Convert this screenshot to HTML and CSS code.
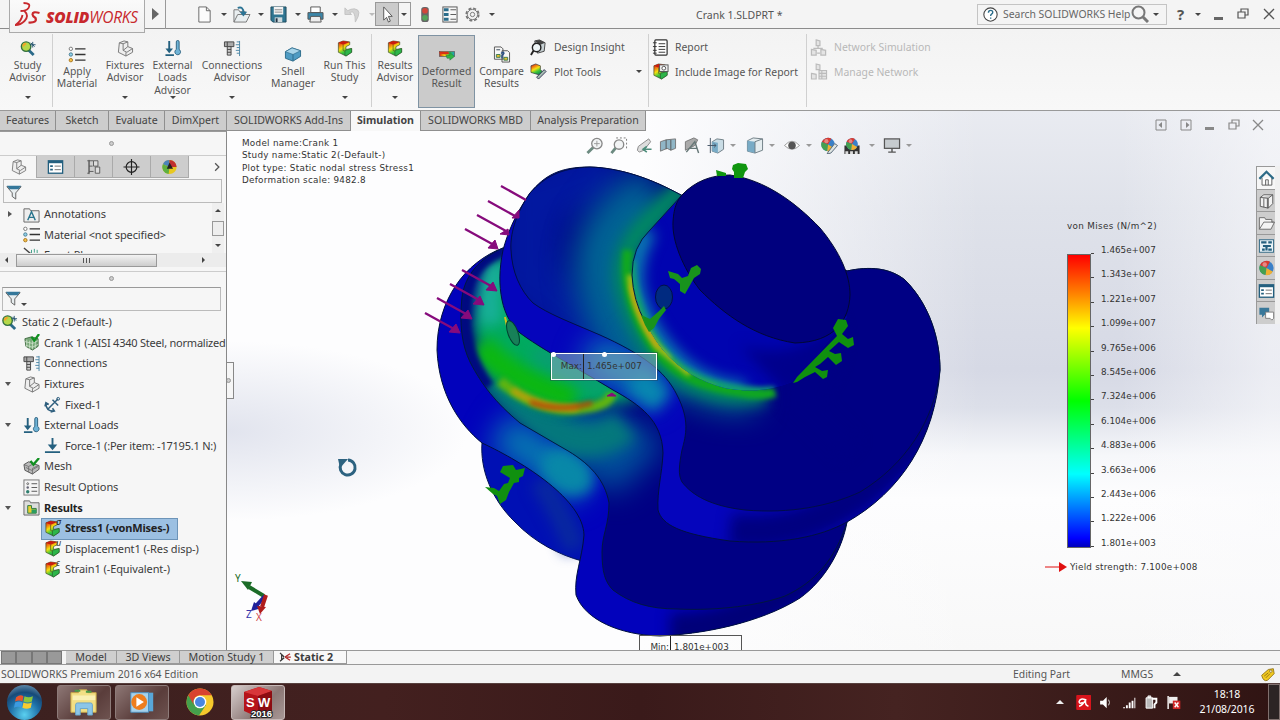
FILE: index.html
```html
<!DOCTYPE html>
<html lang="en">
<head>
	<meta charset="UTF-8">
	<title>Crank 1.SLDPRT - SOLIDWORKS</title>
	<link rel="stylesheet" href="styles.css">
</head>
<body>
	<svg class="defs" width="0" height="0">
		<defs>
			<linearGradient id="rainbow" x1="0" y1="0" x2="0.5" y2="1"><stop offset="0" stop-color="#d81010"/><stop offset=".3" stop-color="#f08010"/><stop offset=".5" stop-color="#f5e010"/><stop offset=".75" stop-color="#3cc83c"/><stop offset="1" stop-color="#158a50"/></linearGradient>
			<linearGradient id="rainbowX"><stop offset="0" stop-color="#e02010"/><stop offset=".35" stop-color="#f0e010"/><stop offset=".65" stop-color="#30c040"/><stop offset="1" stop-color="#20a0c0"/></linearGradient>
			<symbol id="i-plot" viewBox="0 0 18 18"><path d="M2 3 7 1l7 1v3l-4 2v3l6-1v4l-6 4-8-4z" fill="url(#rainbow)" stroke="#3a4a20" stroke-width=".7"/><path d="M2 3l5 2 7-3-7-1z" fill="#c81c10"/><path d="M9 11l7-2v4l-6 4-1-1z" fill="#2db54a" stroke="#2a5a2a" stroke-width=".6"/><path d="M7 5v6l2 1" stroke="#5a5a20" stroke-width=".8" fill="none"/></symbol>
			<symbol id="i-part" viewBox="0 0 18 18"><path d="M3 3 8 1l4 1v5l5 2v4l-7 4-8-4z" fill="#eee" stroke="#777"/><path d="M3 3l4 1v7l4 2 6-4M7 4l5-2M7 11l5-4M10 13v4" fill="none" stroke="#777"/></symbol>
			<symbol id="i-study" viewBox="0 0 18 18"><path d="M9 10l6 6" stroke="#2b6a8a" stroke-width="3"/><circle cx="7" cy="7" r="5" fill="#b5d94a" stroke="#33713e" stroke-width="1.5"/><path d="M4 7a3 3 0 0 1 3-3" stroke="#f3a42b" stroke-width="2" fill="none"/><path d="M14 2v6M11 5h6M12 3l4 4" stroke="#24536e"/></symbol>
			<symbol id="i-list" viewBox="0 0 18 18"><path d="M7 3h11M7 9h11M7 15h11" stroke="#333" stroke-width="1.4"/><circle cx="2.5" cy="3" r="1.8" fill="#fff" stroke="#777"/><circle cx="2.5" cy="9" r="1.8" fill="#8fd0e8" stroke="#4a7c93"/><circle cx="2.5" cy="15" r="1.8" fill="#f6c24a" stroke="#a9761e"/></symbol>
			<symbol id="i-loads" viewBox="0 0 18 18"><path d="M5 1v11M1 16h9" stroke="#24607f" stroke-width="2"/><path d="M1 9h8l-4 5z" fill="#24607f"/><path d="M12.500 2a1.500 1.500 0 0 1 3 0v8a3 3 0 1 1-3 0z" fill="#6fb3d6" stroke="#2d617e"/></symbol>
			<symbol id="i-bolt" viewBox="0 0 18 18"><path d="M1 2h10v5H1z" fill="#aaa" stroke="#444"/><path d="M4 7h4v9H4zM4 10h4M4 13h4M4 2v5" fill="#ccc" stroke="#444"/><path d="M17 1v16M14 2h3M13 5h4M14 8h3M13 11h4M14 14h3" stroke="#4b86a6"/></symbol>
			<symbol id="i-shell" viewBox="0 0 18 18"><path d="M1 6l7-4 9 3v6l-8 5-8-3z" fill="#4f9cc4" stroke="#2c6b8b"/><path d="M1 6l8 3 8-4-9-3z" fill="#a8d5ea" stroke="#2c6b8b" stroke-width=".7"/><path d="M9 9v7" fill="none" stroke="#2c6b8b"/></symbol>
			<symbol id="i-def" viewBox="0 0 18 18"><rect x="1" y="6" width="16" height="5" fill="url(#rainbowX)" stroke="#555" stroke-width=".7"/><path d="M1 6h9l2 2-4 1-7-1z" fill="#d83018"/><path d="M8 10h4V7l5 4-5 4v-2H9z" fill="#2fb844" stroke="#2a6a4a" stroke-width=".5"/></symbol>
			<symbol id="i-compare" viewBox="0 0 18 18"><path d="M1 1h7l2 2v11H1zM9 5h6l2 2v10H9z" fill="#f7f7f7" stroke="#555"/><path d="M3 9h4v3H3zM11 12h4v3h-4z" fill="#e6c030" stroke="#397b52"/><path d="M3 4h4" stroke="#345"/><path d="M8 8q3-3 3 0l-2 2v3" stroke="#254f86" stroke-width="1.500" fill="none"/></symbol>
			<symbol id="i-insight" viewBox="0 0 18 18"><path d="M5 2l5-1 6 3-1 9-7 2z" fill="#c8d2d5" stroke="#444"/><path d="M5 2l5-1 6 3-5 2z" fill="#444"/><circle cx="7" cy="9" r="4.500" fill="#eef5f7" stroke="#222" stroke-width="1.500"/><path d="M4 12l-3 5" stroke="#222" stroke-width="2"/></symbol>
			<symbol id="i-tools" viewBox="0 0 18 18"><path d="M1 3l5-2 5 2v4l2 2-2 4-10-3z" fill="url(#rainbow)" stroke="#333" stroke-width=".7"/><path d="M7 15l8-8 2 2-8 8z" fill="#a5bcb0" stroke="#335"/></symbol>
			<symbol id="i-report" viewBox="0 0 18 18"><rect x="3" y="1" width="13" height="16" rx="1" fill="#fff" stroke="#333" stroke-width="1.300"/><path d="M7 5h7M7 8h7M7 11h7M7 14h7M1 4h4M1 8h4M1 12h4M1 15h4" stroke="#333"/></symbol>
			<symbol id="i-image" viewBox="0 0 18 18"><use href="#i-plot"/><rect x="8" y="2" width="9" height="7" fill="#eee" stroke="#555"/><circle cx="12.500" cy="5.500" r="2" fill="#fff" stroke="#555"/></symbol>
			<symbol id="i-net" viewBox="0 0 18 18"><path d="M6 1l4 1v5H6zM1 11l5 1v5H1zM11 11l5 1v5h-5zM8 7v3M3 10h10M7 15h3" fill="#e4e4e4" stroke="#bbb" stroke-width="1.300"/></symbol>
			<symbol id="i-net2" viewBox="0 0 18 18"><path d="M6 1l4 1v5H6zM1 11l5 1v5H1zM9 8h8v9H9zM9 11h8M9 14h8M12 8v9" fill="#e4e4e4" stroke="#bbb" stroke-width="1.200"/></symbol>
			<symbol id="i-filter" viewBox="0 0 18 18"><path d="M1 3h16l-6 7v7l-4-3v-4z" fill="#e8eef0" stroke="#555"/><path d="M1 2h16l-3 4H4z" fill="#34779a"/></symbol>
			<symbol id="i-annot" viewBox="0 0 18 18"><path d="M1 3h6l1 2h9v12H1z" fill="#eee" stroke="#666"/><path d="M5 15l4-9 4 9M6.500 12h5" fill="none" stroke="#28748d" stroke-width="1.500"/></symbol>
			<symbol id="i-mesh" viewBox="0 0 18 18"><path d="M2 5l7-2 7 2v8l-6 4-7-4z" fill="#78a878" stroke="#456e45"/><path d="M4 6v8M7 7v9M10 7v9M13 6v9M2 8l8 2 6-3M3 12l7 2 6-3" stroke="#dcebd9" stroke-width=".7" fill="none"/><path d="M9 3l3 4 5-7" stroke="#109020" stroke-width="2.400" fill="none"/></symbol>
			<symbol id="i-mesh2" viewBox="0 0 18 18"><path d="M1 7l5-3 5 2 6 2v4l-7 5-8-4z" fill="#bbb" stroke="#555"/><path d="M1 7l5 2 5-3M6 9v6M10 11l6-3M10 11v6M3 10l6 3 7-4" stroke="#666" stroke-width=".8" fill="none"/><path d="M8 3l3 4 6-7" stroke="#109020" stroke-width="2.400" fill="none"/></symbol>
			<symbol id="i-fixed" viewBox="0 0 18 18"><path d="M4 14L15 3M2 8q0 8 8 8M1 11l1-4 3 2M7 17l4-1-2-3M9 4l6 6" stroke="#2f5f7e" stroke-width="1.600" fill="none"/><circle cx="15" cy="3" r="1.500" fill="none" stroke="#2f5f7e"/></symbol>
			<symbol id="i-force" viewBox="0 0 18 18"><path d="M9 1v9M1 16h16" stroke="#24607f" stroke-width="2"/><path d="M4 8h10l-5 6z" fill="#24607f"/></symbol>
			<symbol id="i-opts" viewBox="0 0 18 18"><rect x="1" y="1" width="16" height="16" fill="#f4f4f4" stroke="#777"/><path d="M9 5h6M9 9h6M9 13h6" stroke="#555"/><circle cx="5" cy="5" r="1" fill="#fff" stroke="#666"/><circle cx="5" cy="9" r="1.300" fill="#667"/><circle cx="5" cy="13.500" r="1.800" fill="#2f7f6f"/></symbol>
			<symbol id="i-results" viewBox="0 0 18 18"><path d="M1 2h6l1 2h9v13H1z" fill="#ddd" stroke="#666"/><path d="M5 7h4v3h5v5H5z" fill="#e9d030" stroke="#2b7a44"/><path d="M9 11h5v4H9z" fill="#2c9c60"/></symbol>
			<symbol id="i-props" viewBox="0 0 18 18"><rect x="1" y="2" width="16" height="14" fill="#fff" stroke="#24607f" stroke-width="1.500"/><path d="M1 3.500h16" stroke="#24607f" stroke-width="2.500"/><path d="M3 8h3M3 12h3" stroke="#24607f" stroke-width="2"/><path d="M8 8h7M8 12h7" stroke="#666"/></symbol>
			<symbol id="i-config" viewBox="0 0 18 18"><path d="M4 17V1M4 2h5M4 8h4M4 14h5M2 2h2v14H2" fill="none" stroke="#555"/><path d="M9 2h5v6H9zM11 9h5v7h-5z" fill="#ddd" stroke="#555"/></symbol>
			<symbol id="i-target" viewBox="0 0 18 18"><circle cx="9" cy="9" r="6" fill="none" stroke="#222" stroke-width="1.300"/><path d="M9 0v18M0 9h18" stroke="#222" stroke-width="1.300"/></symbol>
			<symbol id="i-ball" viewBox="0 0 18 18"><circle cx="9" cy="9" r="8" fill="#3a80c8"/><path d="M9 9L1.500 6A8 8 0 0 1 13 2z" fill="#d83a30"/><path d="M9 9L1.500 6A8 8 0 0 0 8 17z" fill="#45a050"/><path d="M9 9l7 4a8 8 0 0 1-8 4z" fill="#f0b030"/><circle cx="7" cy="5" r="2.500" fill="#fff" opacity=".4"/></symbol>
			<symbol id="i-ball2" viewBox="0 0 18 18"><circle cx="9" cy="9" r="8" fill="#e8c820"/><path d="M9 9L1.500 6A8 8 0 0 1 9 1z" fill="#4c84ba"/><path d="M9 9V1a8 8 0 0 1 8 8z" fill="#c03030"/><path d="M9 9L1.500 6A8 8 0 0 0 8 17z" fill="#60b040"/><path d="M9 4l4 7H6z" fill="#222"/></symbol>
			<symbol id="i-win" viewBox="0 0 12 12"><path d="M4 4V1h7v6H8M1 4h7v6H1z" fill="none" stroke="currentColor" stroke-width="1.200"/></symbol>
			<symbol id="i-x" viewBox="0 0 12 12"><path d="M1 1l10 10M11 1L1 11" stroke="currentColor" stroke-width="1.300"/></symbol>
			<symbol id="i-lens" viewBox="0 0 18 18"><path d="M7 11l-6 6" stroke="#6c8a80" stroke-width="3"/><circle cx="11" cy="7" r="5.500" fill="#f2f4f5" stroke="#888" stroke-width="1.400"/><path d="M11 4v6M8 7h6" stroke="#999"/></symbol>
			<symbol id="i-cube" viewBox="0 0 18 18"><path d="M1 4l6-3 10 1v12l-8 3-8-2z" fill="#e4ecef" stroke="#6d7c84"/><path d="M1 4l8 1v12l-8-2z" fill="#78abc6"/><path d="M9 5l8-3M9 5v12" stroke="#6d7c84"/></symbol>
			<symbol id="i-mon" viewBox="0 0 18 18"><rect x="1" y="2" width="16" height="10" fill="#c6cbcf" stroke="#555" stroke-width="1.300"/><path d="M9 12v4M5 16h8" stroke="#555" stroke-width="1.500"/></symbol>
		</defs>
	</svg>

	<div class="app">
		<!-- title bar -->
		<div class="titlebar">
			<div class="logo">
				<svg class="ds" viewBox="0 0 26 26"><path d="M8 1q8 0 5 5-2 3-8 3M9 9q5 5 0 10-4 4-9 4 6-4 7-10" fill="none" stroke="#c8282c" stroke-width="1.800"/><path d="M24 11q-7-2-7 1.500 0 1.500 3 3.500 2 5-7 4.500" fill="none" stroke="#c8282c" stroke-width="2.200"/></svg>
				<b>SOLID</b><span>WORKS</span>
			</div>
			<i class="play"></i>
			<div class="quick">
				<svg viewBox="0 0 18 18"><path d="M3 1h8l4 4v12H3zM11 1v4h4" fill="#fcfcfc" stroke="#666"/></svg><i class="caret"></i>
				<svg viewBox="0 0 18 18"><path d="M1 17V4h5l1 2h6v3h5l-4 8z" fill="#e9eef0" stroke="#777"/><path d="M1 17l4-8h13" fill="none" stroke="#777"/><path d="M5 2q6-2 6 5" stroke="#2b7394" stroke-width="2" fill="none"/><path d="M7 6h8l-4 5z" fill="#2b7394"/></svg><i class="caret"></i>
				<svg viewBox="0 0 18 18"><path d="M1 1h16v16H3l-2-2z" fill="#2f7591" stroke="#204a5c"/><path d="M4 1h10v8H4z" fill="#f3f3f3"/><path d="M5 4h8M5 6.500h8" stroke="#888"/><path d="M5 12h8v5H5z" fill="#cdd9dd"/><path d="M6 13h2v4H6z" fill="#234"/></svg><i class="caret"></i>
				<svg viewBox="0 0 18 18"><path d="M4 1h10v6H4z" fill="#fff" stroke="#555"/><path d="M1 7h16v7H1z" fill="#3b86a8" stroke="#555"/><path d="M4 11h10l1 6H3z" fill="#eee" stroke="#555"/></svg><i class="caret"></i>
				<svg viewBox="0 0 18 18"><path d="M1 2v7h7L6 7q6-4 6 10 8-13-1-14-4 0-7 2z" fill="#d3d3d3" stroke="#c2c2c2"/></svg><i class="caret dim"></i>
				<span class="select"><b><svg viewBox="0 0 18 18"><path d="M5 1v14l3-3 2 5 2-1-2-5h4z" fill="#fff" stroke="#555"/></svg></b><i class="caret"></i></span>
				<svg class="light" viewBox="0 0 18 18"><rect x="5" y="1" width="8" height="16" rx="3" fill="#666"/><circle cx="9" cy="5" r="3" fill="#d2453a"/><circle cx="9" cy="12.500" r="3" fill="#54a35a"/></svg>
				<svg class="o" viewBox="0 0 18 18"><rect x="2" y="1" width="15" height="16" fill="#f7f7f7" stroke="#555"/><path d="M3 4h5M3 9h5M3 14h5" stroke="#2b6d8b" stroke-width="3"/><path d="M10 4h6M10 9h6M10 14h6" stroke="#555"/></svg>
				<svg class="g" viewBox="0 0 18 18"><circle cx="9" cy="9" r="6.500" fill="none" stroke="#777" stroke-width="2" stroke-dasharray="3.100 2"/><circle cx="9" cy="9" r="5.400" fill="#f3f3f3" stroke="#777"/><circle cx="9" cy="9" r="2.300" fill="none" stroke="#777"/></svg><i class="caret"></i>
			</div>
			<div class="doc">Crank 1.SLDPRT *</div>
			<div class="search">
				<svg viewBox="0 0 18 18"><circle cx="9" cy="9" r="8" fill="#fff" stroke="#444" stroke-width="1.300"/><path d="M6.500 7q0-3 2.700-3 2.500 0 2.500 2.200 0 1.500-1.500 2.300-1 .6-1 2.200M9.200 12.500v1.500" fill="none" stroke="#2b6d8b" stroke-width="1.700"/></svg>
				<span>Search SOLIDWORKS Help</span>
				<svg class="mag" viewBox="0 0 18 18"><circle cx="7.500" cy="7.500" r="6" fill="none" stroke="#777" stroke-width="2"/><path d="M12 12l5 5" stroke="#777" stroke-width="3"/></svg>
				<i class="caret"></i>
			</div>
			<div class="wins"><b class="help">?</b><i class="caret"></i><i class="min"></i><svg><use href="#i-win"/></svg><svg><use href="#i-x"/></svg></div>
		</div>

		<!-- command manager -->
		<div class="ribbon">
			<div class="btn b1"><svg><use href="#i-study"/></svg><p>Study<br>Advisor</p><i class="caret"></i></div>
			<i class="sep"></i>
			<div class="btn b2 low"><svg><use href="#i-list"/></svg><p>Apply<br>Material</p></div>
			<div class="btn b3"><svg><use href="#i-part"/></svg><p>Fixtures<br>Advisor</p><i class="caret"></i></div>
			<div class="btn b4"><svg><use href="#i-loads"/></svg><p>External<br>Loads<br>Advisor</p><i class="caret"></i></div>
			<div class="btn b5"><svg><use href="#i-bolt"/></svg><p>Connections<br>Advisor</p><i class="caret"></i></div>
			<div class="btn b6 low"><svg><use href="#i-shell"/></svg><p>Shell<br>Manager</p></div>
			<div class="btn b7"><svg><use href="#i-plot"/></svg><p>Run This<br>Study</p><i class="caret"></i></div>
			<i class="sep"></i>
			<div class="btn b8"><svg><use href="#i-plot"/></svg><p>Results<br>Advisor</p><i class="caret"></i></div>
			<div class="btn b9 low on"><svg><use href="#i-def"/></svg><p>Deformed<br>Result</p></div>
			<div class="btn b10 low"><svg><use href="#i-compare"/></svg><p>Compare<br>Results</p></div>
			<div class="col c1">
				<div><svg><use href="#i-insight"/></svg>Design Insight</div>
				<div><svg><use href="#i-tools"/></svg>Plot Tools<i class="caret"></i></div>
			</div>
			<i class="sep"></i>
			<div class="col c2">
				<div><svg><use href="#i-report"/></svg>Report</div>
				<div><svg><use href="#i-image"/></svg>Include Image for Report</div>
			</div>
			<i class="sep"></i>
			<div class="col c3">
				<div><svg><use href="#i-net"/></svg>Network Simulation</div>
				<div><svg><use href="#i-net2"/></svg>Manage Network</div>
			</div>
		</div>

		<div class="work">
			<div class="tabs">
				<span class="t1">Features</span><span class="t2">Sketch</span><span class="t3">Evaluate</span><span class="t4">DimXpert</span><span class="t5">SOLIDWORKS Add-Ins</span><span class="t6 on">Simulation</span><span class="t7">SOLIDWORKS MBD</span><span class="t8">Analysis Preparation</span>
				<div class="docwins">
					<svg viewBox="0 0 12 12"><path d="M1 1h10v10H1z" fill="none" stroke="currentColor"/><path d="M7 3v6L3.500 6z" fill="currentColor"/></svg>
					<svg viewBox="0 0 12 12"><path d="M1 1h10v10H1z" fill="none" stroke="currentColor"/><path d="M6 3v6l3.500-3z" fill="currentColor"/></svg>
					<i class="min"></i><svg><use href="#i-win"/></svg><svg><use href="#i-x"/></svg>
				</div>
			</div>

			<div class="main">
				<div class="side">
					<div class="grip"><i></i></div>
					<div class="ptabs">
						<span class="on"><svg><use href="#i-part"/></svg></span><span><svg><use href="#i-props"/></svg></span><span><svg><use href="#i-config"/></svg></span><span><svg><use href="#i-target"/></svg></span><span><svg><use href="#i-ball2"/></svg></span>
						<svg class="more" viewBox="0 0 8 12"><path d="M1.500 1l5 5-5 5" fill="none" stroke="#555" stroke-width="1.700"/></svg>
					</div>
					<div class="filter"><svg><use href="#i-filter"/></svg></div>
					<div class="feat">
						<div class="rows">
							<div class="row l1"><i class="tri"></i><svg><use href="#i-annot"/></svg>Annotations</div>
							<div class="row l1"><svg><use href="#i-list"/></svg>Material &lt;not specified&gt;</div>
							<div class="row l1"><svg viewBox="0 0 18 18"><path d="M1 1l7 6" stroke="#444" stroke-width="1.500"/><path d="M9 3v4M12 2v4M15 3v4" stroke="#3a9c84"/></svg>Front Plane</div>
						</div>
						<div class="vbar"><i class="up"></i><b></b><i class="down"></i></div>
					</div>
					<div class="hbar"><i class="lt"></i><b><i></i><i></i><i></i></b><i class="rt"></i></div>
					<div class="grip two"><i></i></div>
					<div class="filter f2"><svg><use href="#i-filter"/></svg><i class="caret"></i></div>
					<div class="tree">
						<div class="row l0"><svg><use href="#i-study"/></svg>Static 2 (-Default-)</div>
						<div class="row l1 long"><svg><use href="#i-mesh"/></svg>Crank 1 (-AISI 4340 Steel, normalized</div>
						<div class="row l1"><svg><use href="#i-bolt"/></svg>Connections</div>
						<div class="row l1"><i class="open"></i><svg><use href="#i-part"/></svg>Fixtures</div>
						<div class="row l2"><svg><use href="#i-fixed"/></svg>Fixed-1</div>
						<div class="row l1"><i class="open"></i><svg><use href="#i-loads"/></svg>External Loads</div>
						<div class="row l2 long"><svg><use href="#i-force"/></svg>Force-1 (:Per item: -17195.1 N:)</div>
						<div class="row l1"><svg><use href="#i-mesh2"/></svg>Mesh</div>
						<div class="row l1"><svg><use href="#i-opts"/></svg>Result Options</div>
						<div class="row l1 bold"><i class="open"></i><svg><use href="#i-results"/></svg>Results</div>
						<div class="row l2 bold sel"><svg><use href="#i-plot"/></svg><em>σ</em><span>Stress1 (-vonMises-)</span></div>
						<div class="row l2"><svg><use href="#i-plot"/></svg><em>u</em><span>Displacement1 (-Res disp-)</span></div>
						<div class="row l2"><svg><use href="#i-plot"/></svg><em>ε</em><span>Strain1 (-Equivalent-)</span></div>
					</div>
				</div>

				<div class="view">
					<svg class="model" viewBox="227 131 1053 519" width="1053" height="519">
						<defs>
							<filter id="b3" filterUnits="userSpaceOnUse" x="400" y="130" width="600" height="540" color-interpolation-filters="sRGB"><feGaussianBlur stdDeviation="2.600"/></filter>
							<filter id="b6" filterUnits="userSpaceOnUse" x="400" y="130" width="600" height="540" color-interpolation-filters="sRGB"><feGaussianBlur stdDeviation="7"/></filter>
							<filter id="b14" filterUnits="userSpaceOnUse" x="400" y="130" width="600" height="540" color-interpolation-filters="sRGB"><feGaussianBlur stdDeviation="15"/></filter>
							<path id="web2" d="M503 248C480 258 465 275 462 297C459 325 462 345 470 362C482 385 495 402 520 423L563 448C590 463 605 480 609 503C609 525 602 535 602 552C602 572 605 582 613 590C630 603 650 609 677 609C720 611 760 605 785 596C815 582 835 560 847 522L700 320L560 240Z"/>
							<path id="side2" d="M503 248C465 262 437 300 437 350C439 395 460 425 482 443C525 463 583 500 584 535C582 560 574 575 576 595C585 620 620 635 660 636C720 633 770 617 800 598C825 580 842 550 847 522"/>
							<path id="wall1" d="M681 195C650 178 620 168 590 167C560 167 545 175 530 193C515 215 508 232 503 250C499 270 499 285 502 300C505 315 512 326 520 333C540 348 570 364 613 390C640 405 662 420 663 453C662 475 657 490 658 510C662 525 680 534 730 541C780 545 820 537 847 522C900 492 935 440 940 370C940 340 930 305 905 280C890 268 870 266 847 271Z"/>
							<path id="face1" d="M681 195C650 178 620 168 590 167C560 168 545 177 530 193C515 215 510 235 511 250C512 272 520 290 533 303C548 314 570 322 600 335C640 353 665 370 677 395C690 420 686 435 682 450C679 465 678 475 682 482C692 495 710 506 745 510C790 514 830 506 860 492C905 465 935 420 940 370C940 340 930 305 905 280C890 268 870 266 847 271Z"/>
							<path id="pin1" d="M682 195L650 230C636 245 632 258 632 275C634 300 645 327 663 350C680 370 700 381 725 388C755 394 785 388 800 377L847 317L760 200Z"/>
							<clipPath id="cWeb2"><use href="#web2"/></clipPath>
							<clipPath id="cSide2"><use href="#side2"/></clipPath>
							<clipPath id="cWall1"><use href="#wall1"/></clipPath>
							<clipPath id="cFace1"><use href="#face1"/></clipPath>
							<clipPath id="cPin1"><use href="#pin1"/></clipPath>
						</defs>
						<!-- rear pin -->
						<path d="M482 443C480 470 492 500 515 522C535 543 560 555 582 561L600 500L520 440Z" fill="#0010b4" stroke="#001050"/>
						<path d="M540 480Q565 520 575 550" stroke="#0828a0" stroke-width="22" fill="none" filter="url(#b6)"/>
						<!-- lower web wall -->
						<g clip-path="url(#cSide2)">
							<rect x="430" y="240" width="430" height="400" fill="#0202bc"/>
							<path d="M500 430L585 485" stroke="#067cb0" stroke-width="42" filter="url(#b14)"/>
							<ellipse cx="567" cy="472" rx="28" ry="20" transform="rotate(35 567 472)" fill="#0888a8" filter="url(#b6)"/>
							<path d="M670 630Q770 630 850 530" stroke="#000078" stroke-width="34" fill="none" filter="url(#b6)"/>
						</g>
						<use href="#side2" fill="none" stroke="#001040"/>
						<!-- lower web face and rod journal -->
						<g clip-path="url(#cWeb2)">
							<rect x="440" y="230" width="430" height="400" fill="#000084"/>
							<path d="M540 430Q610 440 640 470" stroke="#00509a" stroke-width="70" fill="none" filter="url(#b14)"/>
							<path d="M480 350Q500 395 545 425T625 425" stroke="#04787c" stroke-width="34" fill="none" filter="url(#b6)"/>
							<path d="M505 255L480 330Q500 390 560 404L625 395L560 345L510 310Z" fill="#00aa60" stroke="#00aa60" stroke-width="14" filter="url(#b6)"/>
							<path d="M500 262Q484 290 492 325" stroke="#18b098" stroke-width="24" fill="none" filter="url(#b6)"/>
							<path d="M480 345Q515 385 575 398" stroke="#0cb810" stroke-width="26" fill="none" filter="url(#b6)"/>
							<path d="M535 352L605 388" stroke="#0a9c74" stroke-width="16" filter="url(#b6)"/>
							<path d="M500 381Q535 410 572 409T612 393" stroke="#60b410" stroke-width="10" fill="none" filter="url(#b3)"/>
							<path d="M512 390Q545 411 578 408" stroke="#b8a00c" stroke-width="6" fill="none" filter="url(#b3)"/>
							<path d="M530 402Q560 413 592 403" stroke="#b83c08" stroke-width="4" fill="none" filter="url(#b3)"/>
							<path d="M503 248C474 260 461 280 461 310C461 335 467 360 487 388" stroke="#000a80" stroke-width="16" fill="none" filter="url(#b3)"/>
						</g>
						<use href="#web2" fill="none" stroke="#001838" stroke-width=".9"/>
						<path d="M505 317L507 326" stroke="#d0c020" stroke-width="2"/>
						<!-- upper web wall -->
						<g clip-path="url(#cWall1)">
							<rect x="490" y="160" width="460" height="390" fill="#0505bc"/>
							<path d="M590 350L660 390" stroke="#0880b0" stroke-width="40" filter="url(#b14)"/>
							<path d="M635 378L662 402" stroke="#0888b0" stroke-width="26" filter="url(#b6)"/>
							<path d="M730 530Q850 545 940 400" stroke="#000080" stroke-width="34" fill="none" filter="url(#b6)"/>
						</g>
						<use href="#wall1" fill="none" stroke="#001040"/>
						<!-- upper web face -->
						<g clip-path="url(#cFace1)">
							<rect x="500" y="160" width="450" height="360" fill="#000084"/>
							<path d="M620 165L530 200V280L600 340L670 400" stroke="#0218a0" stroke-width="64" fill="none" filter="url(#b14)"/>
							<path d="M660 195Q590 230 608 290T665 385" stroke="#006494" stroke-width="62" fill="none" filter="url(#b14)"/>
							<path d="M640 340Q690 400 755 395" stroke="#006088" stroke-width="34" fill="none" filter="url(#b14)"/>
							<path d="M684 186L650 220Q618 250 624 285Q635 335 668 366T765 394" stroke="#008a60" stroke-width="20" fill="none" filter="url(#b6)"/>
							<path d="M628 250Q622 290 645 333T715 387T775 392" stroke="#10a820" stroke-width="10" fill="none" filter="url(#b3)"/>
							<path d="M630 275Q634 312 658 347L690 374" stroke="#b4c010" stroke-width="6" fill="none" filter="url(#b3)"/>
							<path d="M631 285Q637 318 658 347" stroke="#dc9a10" stroke-width="3" fill="none" filter="url(#b3)"/>
							<path d="M800 300Q860 330 800 400L850 450" stroke="#000084" stroke-width="26" fill="none" filter="url(#b6)"/>
						</g>
						<use href="#face1" fill="none" stroke="#001040" stroke-width=".9"/>
						<!-- main journal -->
						<g clip-path="url(#cPin1)">
							<rect x="625" y="190" width="230" height="210" fill="#0004b0"/>
							<path d="M740 345Q800 365 850 310V400H790z" fill="#00008c" filter="url(#b6)"/>
							<path d="M648 230Q632 255 634 285Q642 325 672 357T745 391" stroke="#0a80b0" stroke-width="18" fill="none" filter="url(#b6)"/>
							<path d="M630 260Q630 295 648 330T700 380T775 392" stroke="#10a070" stroke-width="11" fill="none" filter="url(#b3)"/>
							<path d="M633 305Q645 335 668 359T715 388" stroke="#58b820" stroke-width="5" fill="none" filter="url(#b3)"/>
							<path d="M640 322Q652 343 670 359" stroke="#c8c820" stroke-width="3" fill="none" filter="url(#b3)"/>
						</g>
						<path d="M682 195L650 230Q632 247 632 275Q633 300 645 322" fill="none" stroke="#002040"/>
						<path d="M682 195C695 181 712 175 730 175C765 180 795 202 820 228C840 252 850 275 850 295C849 320 835 342 795 343C755 337 725 315 700 290C682 267 672 240 673 222C674 205 678 200 682 195Z" fill="#00007e" stroke="#000834"/>
						<ellipse cx="664" cy="297" rx="8.500" ry="12" fill="#002a80" stroke="#001048"/>
						<ellipse cx="513" cy="333" rx="5" ry="13" transform="rotate(-20 513 333)" fill="#178058" stroke="#024030"/>
						<!-- fixture symbols -->
						<path d="M716 170l10 3v3h-9zM733 165l5-2 8 1 2 5-3 3-2 6h-9v-6l-2-3z" fill="#10960f"/>
						<path d="M668 271l10 3 4 4 6-2 3-8 6-3 4 4-1 5-6 4-5 9-4 7-5-3v-7l-6-5-4-1z" fill="#18931c"/>
						<path d="M641 315l9 4 8-7 6-6 2 4-7 9-5 9-5 4-4-7z" fill="#18931c"/>
						<path d="M793 383l4-6 40-41-4-8 5-9 8 1 2 6-6 8 6 5 5-2 1 8-6 3-9-6-10 9 6 3 6-1 1 8-6 4-8-8-8 7-5 3 7 4 6-1-1 7-4 2-8-7-10 5-8 5z" fill="#10900f"/>
						<path d="M503 466l10-1 3 5 9-2-2 8-4 2v4l-5 1-5 9-3 8-6 4-3-8-4-2-8-7 9 1 5 3 5-7 4-1 2-5-5-3-5-3z" fill="#10900f"/>
						<!-- force arrows -->
						<g stroke="#860b7c" stroke-width="2.300" fill="#860b7c">
							<path d="M501 186l25 14M488 201l27 15M477 215l29 16M465 229l29 16M462 270l29 16M450 284l29 16M437 298l29 16M425 313l29 16"/>
							<path d="M519 210v8l-7 0zM508 229l1 6-9-1zM495 240l3 9-10-1zM493 282l4 9-11-1zM480 296l4 9-11-1zM468 310l4 9-11-1zM456 324l4 9-11-1zM607 396l5-3 4 3z" stroke-width="1"/>
						</g>
						<!-- rotate cursor -->
						<path d="M341 464a7.500 7.500 0 1 0 7-4" fill="none" stroke="#2c6280" stroke-width="3"/><path d="M338 459l10 0-8 9z" fill="#2c6280"/>
						<!-- triad -->
						<path d="M264 596l-15-9" stroke="#1b6b27" stroke-width="4"/><path d="M241 581l11 1-4 8z" fill="#1b6b27"/>
						<path d="M265 596l-9 10" stroke="#20209a" stroke-width="4"/><path d="M251 611l3-9 8 6z" fill="#20209a"/>
						<path d="M266 595l-4 12" stroke="#b01c1c" stroke-width="4"/><path d="M260 614l-3-8 9 1z" fill="#b01c1c"/>
						<g class="axis"><text x="235" y="582" fill="#1b6b27">Y</text><text x="246" y="618" fill="#3434aa">Z</text><text x="256" y="621" fill="#d04848">X</text></g>
						<path d="M1045 567h16" stroke="#e01010"/><path d="M1059 562l8 5-8 5z" fill="#e01010"/>
					</svg>

					<div class="info">Model name:Crank 1<br>Study name:Static 2(-Default-)<br>Plot type: Static nodal stress Stress1<br>Deformation scale: 9482.8</div>

					<div class="hud">
						<svg><use href="#i-lens"/></svg>
						<svg viewBox="0 0 18 18"><path d="M6 11l-5 6" stroke="#6c8a80" stroke-width="3"/><circle cx="9" cy="8" r="5" fill="#f2f4f5" stroke="#888" stroke-width="1.400"/><path d="M6 1h11v11" stroke="#777" stroke-dasharray="2 2" fill="none"/></svg>
						<svg viewBox="0 0 18 18"><path d="M3 10l11-8 2 3-7 9-5 2-2-2z" fill="#ddd" stroke="#888"/><path d="M17 13H9M12 10l-4 3 4 3" stroke="#4c8c7a" stroke-width="1.700" fill="none"/></svg>
						<svg viewBox="0 0 18 18"><path d="M1 5l6-2 10-1v10l-5 2-4-2-7 3z" fill="#90b6c6" stroke="#777"/><path d="M7 3v10M12 3v11" stroke="#555"/></svg>
						<svg viewBox="0 0 18 18"><path d="M2 5l9-4 4 2-3 6-10 5z" fill="#aaa" stroke="#777"/><path d="M3 16L12 5l4 12M7 12h7" stroke="#677" stroke-width="1.500" fill="none"/></svg>
						<svg class="s1" viewBox="0 0 18 18"><path d="M5 5l5-3 7 1v10l-6 4-6-2z" fill="#c9dce5" stroke="#6d7c84"/><path d="M5 5l6 1v11l-6-2z" fill="#78abc6"/><path d="M3 1v16M0 9h9M7 7l2 2-2 2" stroke="#456" fill="none"/></svg><i class="caret"></i>
						<svg class="s2"><use href="#i-cube"/></svg><i class="caret"></i>
						<svg class="s3" viewBox="0 0 18 18"><path d="M1 9q8-9 16 0-8 8-16 0z" fill="#fff" stroke="#999"/><circle cx="9" cy="9" r="4" fill="#555"/></svg><i class="caret"></i>
						<svg class="s4" viewBox="0 0 18 18"><use href="#i-ball" width="16" height="16"/><path d="M8 16l7-9 3 2-7 8-4 1z" fill="#dfe5e2" stroke="#567"/></svg>
						<svg class="s5" viewBox="0 0 18 18"><rect x="1" y="9" width="16" height="9" fill="#333"/><path d="M2 15h3v3H2zM7 15h3v3H7zM12 15h3v3h-3z" fill="#ddd"/><use href="#i-ball" x="2" width="14" height="15"/></svg><i class="caret"></i>
						<svg class="s6"><use href="#i-mon"/></svg><i class="caret"></i>
					</div>

					<div class="callout max"><span>Max:</span><span>1.465e+007</span></div>
					<div class="callout minv"><span>Min:</span><span>1.801e+003</span></div>

					<div class="legend">
						<p>von Mises (N/m^2)</p>
						<div class="scale">
							<div class="bar"></div>
							<ul>
								<li>1.465e+007</li><li>1.343e+007</li><li>1.221e+007</li><li>1.099e+007</li><li>9.765e+006</li><li>8.545e+006</li><li>7.324e+006</li><li>6.104e+006</li><li>4.883e+006</li><li>3.663e+006</li><li>2.443e+006</li><li>1.222e+006</li><li>1.801e+003</li>
							</ul>
						</div>
						<p class="yield">Yield strength: 7.100e+008</p>
					</div>

					<div class="pane">
						<span class="on"><svg viewBox="0 0 18 18"><path d="M4 9v8h11V9M8 17v-6h3v6" fill="#fff" stroke="#555"/><path d="M1 10l8-8 8 8" fill="none" stroke="#2d6b87" stroke-width="2.500"/></svg></span>
						<span><svg viewBox="0 0 18 18"><path d="M2 5l4-3h10v10l-5 5-9-2zM6 6v10M10 6v11M2 5l9 1 5-4M11 6v11" fill="#f2f2f2" stroke="#555"/></svg></span>
						<span><svg viewBox="0 0 18 18"><path d="M1 16V3h6l1 2h7v3h3l-4 8z" fill="#f4f4f4" stroke="#666"/><path d="M1 16l5-8h11" fill="none" stroke="#666"/></svg></span>
						<span><svg viewBox="0 0 18 18"><rect x="1" y="2" width="16" height="14" fill="#e8f2f6" stroke="#24607f"/><path d="M3 5h6M11 5h4M5 9h9M9 9v5M4 13h3M11 13h4" stroke="#24607f" stroke-width="2.500"/></svg></span>
						<span><svg><use href="#i-ball"/></svg></span>
						<span><svg><use href="#i-props"/></svg></span>
						<span><svg viewBox="0 0 18 18"><path d="M1 3h11v8H7l-3 3v-3H1z" fill="#39789a"/><path d="M8 8h9v7l-2 2-2-2H8z" fill="#fff" stroke="#777"/></svg></span>
					</div>
					<div class="handle"><i></i></div>
				</div>
			</div>
		</div>

		<div class="btabs">
			<div class="nav"><i></i><i></i><i></i><i></i></div>
			<span class="m1">Model</span><span class="m2">3D Views</span><span class="m3">Motion Study 1</span><span class="m4 on"><svg viewBox="0 0 14 12"><path d="M1 1l5 5M1 11l5-4M3 3v6" stroke="#333" stroke-width="1.500"/><path d="M7 6l6-4M7 6l6 4M9 6h5" stroke="#b02828" stroke-width="1.500"/></svg>Static 2</span>
		</div>
		<div class="status"><span>SOLIDWORKS Premium 2016 x64 Edition</span><span class="edit">Editing Part</span><span class="units">MMGS</span><i class="upc"></i><svg viewBox="0 0 18 18"><path d="M2 10l8-7 6-1 1 6-8 8q-5 2-7-6z" fill="#f0c820" stroke="#8c6e10"/><circle cx="13" cy="5" r="1.500" fill="#fff" stroke="#8c6e10"/><path d="M5 11l5-4M7 13l5-5" stroke="#8c6e10"/></svg></div>

		<!-- windows taskbar -->
		<div class="taskbar">
			<div class="orb"><svg viewBox="0 0 20 20"><path d="M2 5q4-3 7-1L8 9Q5 7 1 9z" fill="#e8542c"/><path d="M10 4q4 2 8 0l-1 5q-4 2-8 0z" fill="#8cc63c"/><path d="M1 10q4-2 7 0l-1 5q-3-2-7 0z" fill="#3c9be0"/><path d="M9 10q4 2 8 0l-1 5q-4 2-8 0z" fill="#f8cc30"/></svg></div>
			<div class="task k1"><svg viewBox="0 0 32 30"><path d="M2 5h8l1-3h8l1 3h9v21H2z" fill="#f2df85" stroke="#c9a846"/><path d="M4 8h24v5H4z" fill="#faf0b4"/><path d="M6 3h6M18 4h6" stroke="#4a9c48" stroke-width="2"/><path d="M7 29V18q0-2 2-2h14q2 0 2 2v11h-5v-7h-8v7z" fill="#8cc6e8" stroke="#68a4c8"/></svg></div>
			<div class="task k2"><svg viewBox="0 0 32 30"><path d="M10 5h18v20H10z" fill="#58a6d8"/><path d="M4 5h19v21H4z" fill="#a6d2ec" stroke="#4b8dbb"/><circle cx="13" cy="15" r="8.500" fill="#ee7d1e"/><path d="M10 10l8 5-8 5z" fill="#fff"/></svg></div>
			<svg class="chrome" viewBox="0 0 28 28"><circle cx="14" cy="14" r="13.500" fill="#f6c92c"/><path d="M14 14L2.300 7.300A13.500 13.500 0 0 0 13 27.500L20 17z" fill="#44a04c"/><path d="M2.300 7.300A13.500 13.500 0 0 1 25.700 7.300H14a7 7 0 0 0-6 10z" fill="#d8432f"/><circle cx="14" cy="14" r="6.300" fill="#fff"/><circle cx="14" cy="14" r="5" fill="#4a86e0"/></svg>
			<div class="task k3">
				<svg class="sw" viewBox="0 0 34 32"><path d="M3 6l15-5 13 4v20l-14 6-14-6z" fill="#b5141a"/><path d="M3 6l15-5 13 4-14 5z" fill="#d8373a"/><path d="M17 10l14-5v20l-14 6z" fill="#8c0c12"/><text x="5" y="21" class="big">S</text><text x="17" y="21" class="big">W</text><text x="10" y="30.500" class="yr">2016</text></svg>
			</div>
			<div class="tray">
				<i class="upc"></i>
				<svg class="av" viewBox="0 0 16 16"><rect width="16" height="16" rx="1" fill="#d8141c"/><path d="M3 12q4-1 7-7-6-2-7 2 0 3 4 1M10 5q-1 6 3 7" stroke="#fff" stroke-width="1.600" fill="none"/></svg>
				<svg viewBox="0 0 16 16"><path d="M2 6h3l4-4v12l-4-4H2z" fill="#fff"/><path d="M11 5q2 3 0 6" stroke="#ddd" fill="none"/></svg>
				<svg viewBox="0 0 16 16"><path d="M2 13h2v1H2zM5 11h2v3H5zM8 8h2v6H8zM11 6h2v8h-2zM14 3h1v11h-1z" fill="#fff"/></svg>
				<svg viewBox="0 0 16 16"><path d="M3 3h7v11H3zM5 1h3v2H5z" fill="#bbb" stroke="#fff"/><path d="M9 4h5v4l-2 2v4" stroke="#fff" stroke-width="2" fill="none"/></svg>
				<svg viewBox="0 0 16 16"><path d="M2 1v14" stroke="#fff" stroke-width="1.500"/><path d="M3 2h9v7H3z" fill="#eee"/><path d="M7 6h8v9H7z" fill="#d02828"/><path d="M9 8l4 5M13 8l-4 5" stroke="#fff" stroke-width="1.500"/></svg>
				<div class="clock">18:18<br>21/08/2016</div>
				<i class="peek"></i>
			</div>
		</div>
	</div>
</body>
</html>
```
FILE: styles.css
```css
*{margin:0;padding:0;box-sizing:border-box;}
body{width:1280px;height:720px;overflow:hidden;font:11px/12px "Noto Sans","Open Sans",sans-serif;color:#3c3c3c;background:#f5f5f5;}
i,em{font-style:normal;}
svg{display:block;flex:none;}
.defs{position:absolute;}
.app{display:flex;flex-direction:column;width:1280px;height:720px;}
.caret{flex:none;border:3px solid transparent;border-top:3px solid #444;border-bottom:0;width:6px;height:3px;}
.caret.dim{border-top-color:#bbb;}
.upc{border:4px solid transparent;border-bottom:4px solid #444;border-top:0;}
.min{width:9px;height:3px;background:#666;}

/*title bar*/
.titlebar{height:29px;display:flex;align-items:center;border-bottom:1px solid #8c8c8c;background:#f4f4f4;position:relative;z-index:2;}
.logo{width:136px;height:33px;margin-left:9px;align-self:flex-start;background:linear-gradient(#fafafa,#f1f1f1);border:1px solid #aaa;border-top:0;display:flex;align-items:center;color:#c8282c;font:italic 15.500px/33px "Open Sans",sans-serif;flex:none;letter-spacing:-.2px;padding-top:2px;}
.logo b{font-weight:800;}
.logo .ds{width:27px;height:26px;margin:0 4px 5px 5px;}
.play{border:6px solid transparent;border-left:7px solid #666;border-right:0;margin:0 6px 0 7px;}
.quick{display:flex;align-items:center;height:29px;border-left:1px solid #999;padding-left:29px;width:330px;flex:none;}
.quick svg{width:19px;height:17px;}
.quick .caret{margin:0 5px 0 7px;}
.select{display:flex;align-items:center;height:24px;border:1px solid #999;margin:0 5px 0 -5px;width:36px;flex:none;}
.select b{background:#cbcbcb;height:22px;width:23px;border-right:1px solid #999;padding:3px 2px;}
.quick .select .caret{margin:0 2px;}
.quick .light{width:18px;}
.quick .o{margin-left:6px;}
.quick .g{margin-left:4px;}
.doc{width:482px;padding:2px 0 0 201px;font-size:10.500px;color:#555;white-space:nowrap;flex:none;}
.search{width:190px;height:21px;border:1px solid #c4c4c4;display:flex;align-items:center;padding-left:5px;color:#666;flex:none;font-size:10.400px;white-space:nowrap;}
.search svg{width:15px;height:15px;margin-right:5px;}
.search span{width:128px;}
.search .mag{width:18px;height:18px;margin-right:4px;}
.wins{display:flex;align-items:center;color:#555;padding-left:10px;flex:none;}
.wins .help{font-size:15px;width:18px;}
.wins .min{margin:9px 14px 0 13px;}
.wins svg{width:12px;height:12px;margin-right:14px;}
.wins svg+svg{margin-right:0;}

/*command manager*/
.ribbon{height:82px;display:flex;background:linear-gradient(#f3f3f3,#f8f8f8);border-bottom:1px solid #999;}
.sep{width:1px;height:73px;margin-top:5px;background:#d0d0d0;flex:none;}
.btn{height:73px;margin-top:6px;padding-top:5px;display:flex;flex-direction:column;align-items:center;text-align:center;font-size:10.400px;line-height:12.300px;color:#555;flex:none;white-space:nowrap;}
.btn svg{width:18px;height:17px;margin-bottom:2px;}
.btn.low{padding-top:11px;}
.btn .caret{margin-top:auto;margin-bottom:9px;}
.b1{width:49px;margin-left:3px;}
.b2,.b3{width:48px;}
.b4{width:47px;}
.b5{width:72px;}
.b6{width:50px;}
.b7{width:53px;}
.b8{width:46px;}
.b9{width:57px;}
.b10{width:53px;}
.btn.on{background:#cbcbcb;border:1px solid #7f93a3;padding-top:10px;}
.col{padding-top:6px;font-size:10.400px;color:#555;flex:none;}
.col div{display:flex;align-items:center;height:24.500px;white-space:nowrap;}
.col svg{width:17px;height:17px;margin-right:7px;}
.c1{width:120px;padding-left:2px;}
.c1 .caret{margin-left:auto;margin-right:6px;}
.c2{width:157px;padding-left:3px;}
.c2 svg{margin-right:6px;}
.c3{padding-left:3px;color:#b8b8b8;}
.c3 svg{width:18px;margin-right:6px;}

/*work area*/
.work{height:539px;background:radial-gradient(ellipse 240px 90px at 227px 320px,rgba(222,225,236,.9),rgba(255,255,255,0)),linear-gradient(90deg,rgba(255,255,255,0) 1120px,rgba(250,250,252,.6) 1270px),linear-gradient(90deg,#fdfdfe 640px,rgba(253,253,254,0) 980px),linear-gradient(#e9ebf1,#dfe2ea 18%,#dadde7 35%,#d6d9e5 48%,#dcdfe9 55%,#f6f7fa 64%,#fdfdfe 72%,#f8f8f8);}
.tabs{display:flex;height:20px;}
.tabs span{height:20px;line-height:19px;text-align:center;background:#cdcdcd;border-right:1px solid #8f8f8f;border-bottom:1px solid #8f8f8f;font-size:10.600px;color:#444;white-space:nowrap;}
.tabs .on{background:#f8f8f8;border-bottom:0;font-weight:bold;}
.t1{width:56px;}
.t2{width:53px;}
.t3{width:56px;}
.t4{width:62px;}
.t5{width:124px;}
.t6{width:70px;}
.t7{width:110px;}
.t8{width:115px;}
.docwins{margin-left:509px;display:flex;align-items:center;color:#888;gap:12.500px;height:28px;}
.docwins svg{width:12px;height:12px;}
.docwins .min{margin:7px 1px 0;background:#888;}
.main{display:flex;height:519px;}
.side{width:227px;background:#f6f6f6;border-right:1px solid #888;border-top:1px solid #999;flex:none;overflow:hidden;}
.grip{height:23px;padding-top:9px;}
.grip i,.handle i{display:block;width:5px;height:5px;border:1px solid #999;border-radius:50%;background:#ccc;margin-left:109px;}
.ptabs{display:flex;height:23px;align-items:stretch;border-top:1px solid #ccc;}
.ptabs span{width:38px;background:#cdcdcd;border:1px solid #aaa;border-left:0;border-top:0;padding:3px 10px;}
.ptabs .on{background:#f6f6f6;border-bottom:0;width:37px;}
.ptabs span svg{width:17px;height:16px;}
.more{width:6px;height:10px;margin:6px 0 0 25px;}
.filter{height:24px;margin:1px 4px 0 3px;border:1px solid #bbb;padding:4px 2px;}
.filter svg{width:16px;height:16px;}
.feat{display:flex;height:50px;overflow:hidden;}
.rows{width:212px;padding-top:1px;}
.row{display:flex;align-items:center;height:20.600px;white-space:nowrap;font-size:11px;letter-spacing:-.1px;position:relative;color:#3c3c3c;}
.long{letter-spacing:-.22px;}
.row svg{width:17px;height:17px;margin-right:4px;}
.l0{padding-left:1px;}
.l1{padding-left:23px;}
.l2{padding-left:44px;}
.bold{font-weight:bold;color:#222;letter-spacing:-.2px;}
.tri{position:absolute;left:8px;border:3px solid transparent;border-left:4px solid #555;border-right:0;}
.open{position:absolute;left:5px;border:3px solid transparent;border-top:4px solid #555;border-bottom:0;}
.vbar{width:12px;display:flex;flex-direction:column;align-items:center;justify-content:space-between;padding:6px 0 6px;background:#efefef;}
.vbar b{width:12px;height:15px;border:1px solid #999;background:#eee;}
.up,.down,.lt,.rt{border:3px solid transparent;}
.up{border-bottom:3px solid #444;border-top:0;}
.down{border-top:3px solid #444;border-bottom:0;}
.hbar{display:flex;align-items:center;height:14px;background:#ececec;position:relative;}
.hbar b{width:141px;height:13px;border:1px solid #999;background:linear-gradient(#f3f3f3,#ccc);margin:0 45px 0 8px;display:flex;justify-content:center;align-items:center;gap:2px;}
.hbar b i{width:1px;height:5px;background:#555;}
.lt{border-right:3px solid #444;border-left:0;margin-left:5px;}
.rt{border-left:3px solid #444;border-right:0;}
.grip.two{height:15px;padding-top:4px;border-top:1px solid #ccc;margin-top:4px;}
.f2{display:flex;align-items:flex-end;margin:1px 5px 1px 2px;border-top-color:#999;}
.tree .row em{position:absolute;left:56px;top:-1px;font:italic 9px/10px "Noto Sans",sans-serif;}
.sel:before{content:"";position:absolute;left:41px;top:0;width:135px;height:20px;background:#9cc0e2;border:1px solid #6d94b8;}
.sel svg,.sel span{position:relative;}

/*graphics area*/
.view{width:1053px;position:relative;overflow:hidden;}
.model{position:absolute;left:0;top:0;}
.axis{font:10px "Noto Sans",sans-serif;}
.info,.callout,.legend{font-family:"DejaVu Sans",sans-serif;font-size:8.800px;color:#333;}
.info{position:absolute;left:15px;top:6px;line-height:12.300px;letter-spacing:.28px;}
.hud{position:absolute;left:359px;top:6px;display:flex;align-items:center;}
.hud svg{width:18px;height:17px;margin-right:6.300px;}
.hud .caret{border-top-color:#999;margin:0 8px 0 1px;}
.hud .s1,.hud .s2,.hud .s3,.hud .s6{margin-right:4px;}
.hud .s1+.caret{margin-right:10px;}
.hud .s4{margin-right:5px;}
.hud .s5+.caret{margin-left:8px;}
.hud .s5{margin-right:0;}
.callout{position:absolute;display:flex;border:1px solid #fff;line-height:25px;}
.callout span+span{border-left:1px solid #222;padding-left:3px;}
.max{left:324px;top:222px;width:106px;height:27px;background:rgba(125,165,185,.6);outline:1px solid rgba(40,60,80,.4);}
.max span{width:31px;text-align:right;padding-right:1px;}
.max span+span{width:72px;text-align:left;}
.max:before,.max:after{content:"";position:absolute;left:-1px;top:-2px;width:5px;height:5px;border-radius:50%;background:#fff;}
.max:after{left:50px;}
.minv{left:412px;top:504px;width:103px;height:22px;border:1px solid #555;line-height:22px;}
.minv span{width:30px;text-align:right;padding-right:1px;}
.minv span+span{width:70px;text-align:left;}
.legend{position:absolute;left:840px;top:89px;width:140px;line-height:12px;white-space:nowrap;}
.legend p{letter-spacing:.33px;}
.scale{display:flex;padding-top:12px;}
.bar{width:24px;height:294px;margin:10px 10px 0 0;border:1px solid #666;background:linear-gradient(#f00,#ff8000 13%,#ff0 25%,#0f0 50%,#0ff 75%,#00f 97%,#00b);}
.scale ul{list-style:none;height:317px;}
.scale li{height:24.400px;position:relative;}
.scale li:before{content:"";position:absolute;left:-10px;top:9px;width:3px;height:1px;background:#444;}
.legend .yield{padding-left:3px;letter-spacing:.24px;}
.pane{position:absolute;left:1029px;top:35px;width:24px;background:linear-gradient(90deg,#ccc 18px,#f0f0f0 18px);height:158px;overflow:hidden;}
.pane span{display:block;height:22.500px;width:19px;border:1px solid #999;border-bottom:0;border-right:0;background:#cdcdcd;padding:3px 1px;}
.pane .on{background:#f6f6f6;}
.pane svg{width:17px;height:16px;}
.handle{position:absolute;left:-1px;top:231px;width:8px;height:37px;background:#f6f6f6;border:1px solid #888;border-left:0;padding-top:15px;}
.handle i{margin-left:0;}

/*bottom bars*/
.btabs{height:15px;display:flex;border-top:1px solid #999;background:#f5f5f5;border-bottom:1px solid #999;}
.btabs span{border:1px solid #999;border-left:0;border-top:0;background:#cfcfcf;line-height:12px;font-size:10.700px;text-align:center;height:13px;}
.btabs .on{background:#f8f8f8;font-weight:bold;display:flex;align-items:center;gap:3px;padding-left:5px;white-space:nowrap;}
.btabs svg{width:12px;height:10px;}
.nav{display:flex;width:61px;background:#8e8e8e;margin:0 4px 0 1px;}
.nav i{flex:1;border:1px solid #777;background:#999;}
.m1{width:51px;}
.m2{width:63px;}
.m3{width:94px;}
.m4{width:73px;}
.status{height:18px;display:flex;align-items:center;background:#f3f3f3;font-size:10.400px;padding-left:1px;color:#555;}
.status span{width:1012px;}
.status .edit{width:108px;}
.status .units{width:52px;}
.status svg{width:15px;height:15px;margin-left:79px;}
.taskbar{height:37px;background:linear-gradient(90deg,#3c2120,#43201f 30%,#3a1a1a 50%,#452321 70%,#301413);border-top:1px solid #57403e;display:flex;align-items:center;}
.orb{width:35px;height:35px;border-radius:50%;background:radial-gradient(circle at 50% 85%,#5ad0f0,#1c6ca4 45%,#174a78 65%,#89adc4);margin:0 15px 0 7px;padding:7px;}
.orb svg{width:21px;height:21px;}
.task{height:35px;width:54px;border:1px solid #8d7b79;border-radius:3px;background:linear-gradient(135deg,#8d7775,#5a3d3b 60%,#6e5350);display:flex;justify-content:center;align-items:center;margin-right:4px;}
.task svg{width:30px;height:28px;}
.chrome{width:28px;height:28px;margin:0 17px 0 13px;}
.k3{background:linear-gradient(135deg,#d8cfce,#8c7775 60%,#a89896);border-color:#c6b8b6;}
.task .sw{width:34px;height:32px;}
.sw text{fill:#fff;font-family:"Liberation Sans",sans-serif;font-weight:bold;}
.sw .big{font-size:13px;}
.sw .yr{font-size:9.500px;stroke:#222;stroke-width:2px;paint-order:stroke;}
.tray{margin-left:auto;display:flex;align-items:center;color:#fff;gap:7px;}
.tray .upc{border-bottom-color:#eee;margin-right:5px;}
.tray svg{width:15.500px;height:15px;}
.clock{width:58px;text-align:center;font-size:10.500px;line-height:15px;margin-left:10px;letter-spacing:-.1px;}
.peek{width:12px;height:36px;border:1px solid #80706e;background:#2c2424;margin-left:5px;}
```
